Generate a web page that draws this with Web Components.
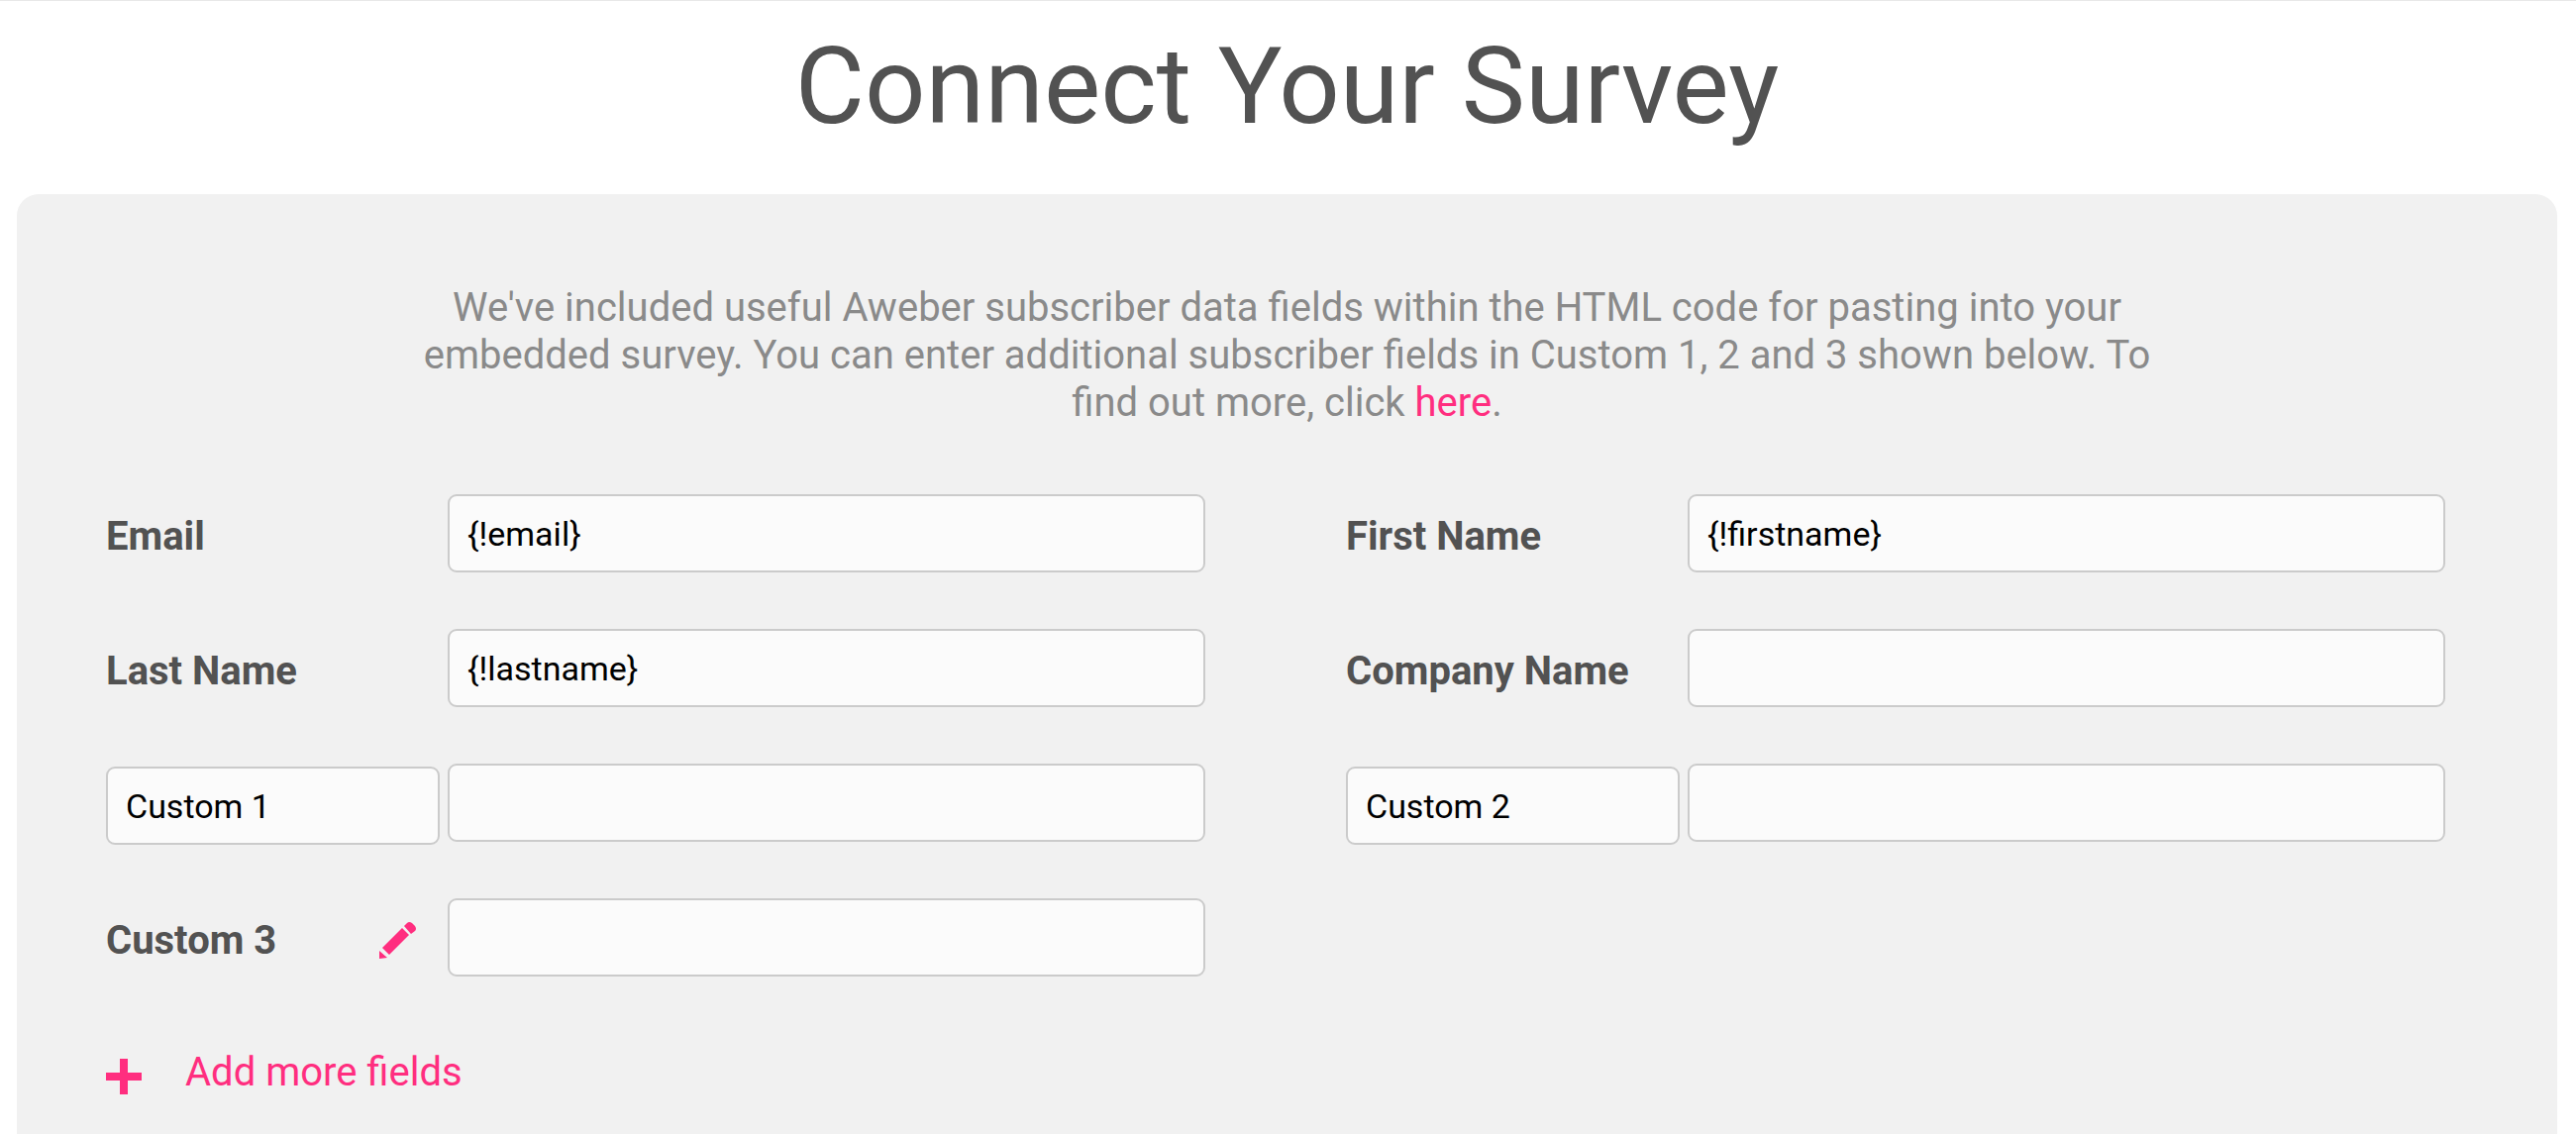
<!DOCTYPE html>
<html lang="en">
<head>
<meta charset="utf-8">
<title>Connect Your Survey</title>
<style>
  html {
    --text: #525252;
    --muted: #8a8a8a;
    --accent: #ff2e7f;
    --panel: #f1f1f1;
    --field: #fbfbfb;
    --line: #cbcbcb;
    --label-width: 337px;
  }
  body {
    margin: 0;
    font-family: Roboto, sans-serif;
    font-size: 40px;
    line-height: 48px;
    color: var(--text);
    background: #fff;
  }
  a {
    color: var(--accent);
    text-decoration: none;
  }
</style>
</head>
<body>

<survey-page>
  <span slot="title">Connect Your Survey</span>
  <survey-panel>
    <span slot="intro">We've included useful Aweber subscriber data fields within the HTML code for pasting into your embedded survey. You can enter additional subscriber fields in Custom 1, 2 and 3 shown below. To find out more, click <a href="#help">here</a>.</span>
    <survey-field label="Email" value="{!email}"></survey-field>
    <survey-field label="First Name" value="{!firstname}"></survey-field>
    <survey-field label="Last Name" value="{!lastname}"></survey-field>
    <survey-field label="Company Name"></survey-field>
    <survey-field label="Custom 1" editing></survey-field>
    <survey-field label="Custom 2" editing></survey-field>
    <survey-field label="Custom 3" custom></survey-field>
    <add-button slot="footer">Add more fields</add-button>
  </survey-panel>
</survey-page>

<script>
  function attach(el, html) {
    const template = document.createElement('template');
    template.innerHTML = html;
    el.attachShadow({mode: 'open'});
    el.shadowRoot.appendChild(template.content.cloneNode(true));
  }

  class SurveyPage extends HTMLElement {
    constructor() {
      super();
      attach(this, `
        <style>
          :host {
            display: flex;
            flex-direction: column;
            box-sizing: border-box;
            min-height: 100vh;
            border-top: 1px solid #e8e8e8;
          }
          h1 {
            margin: 0;
            padding: 22px 19px 45px 17px;
            font-size: 108px;
            line-height: 128px;
            font-weight: 400;
            text-align: center;
          }
          main {
            display: flex;
            flex: 1;
            padding: 0 19px 0 17px;
          }
        </style>
        <h1><slot name="title"></slot></h1>
        <main><slot></slot></main>
      `);
    }
  }

  class SurveyPanel extends HTMLElement {
    constructor() {
      super();
      attach(this, `
        <style>
          :host {
            display: block;
            flex: 1;
            padding-top: 91px;
            border-radius: 22px 22px 0 0;
            background: var(--panel);
          }
          p {
            width: 70%;
            margin: 0 auto 68px;
            color: var(--muted);
            text-align: center;
          }
          form {
            display: grid;
            grid-template-columns: 1fr 1fr;
            gap: 57px 142px;
            padding: 0 113px 0 90px;
          }
          .footer {
            grid-column: 1 / -1;
          }
        </style>
        <p><slot name="intro"></slot></p>
        <form>
          <slot></slot>
          <div class="footer"><slot name="footer"></slot></div>
        </form>
      `);
    }
  }

  class SurveyField extends HTMLElement {
    connectedCallback() {
      if (this.shadowRoot) return;
      attach(this, `
        <style>
          :host {
            display: grid;
            grid-template-columns: var(--label-width) 1fr;
            gap: 8px;
            height: 79px;
          }
          .name {
            display: flex;
            align-items: center;
            justify-content: space-between;
            height: 79px;
            padding-top: 3px;
          }
          label {
            font-weight: 700;
            white-space: nowrap;
          }
          input {
            box-sizing: border-box;
            width: 100%;
            height: 79px;
            margin: 0;
            padding: 0 18px;
            border: 2px solid var(--line);
            border-radius: 9px;
            background: var(--field);
            color: #000;
            font-family: inherit;
            font-size: 34px;
          }
          input:focus {
            outline: none;
            border-color: var(--accent);
          }
          button {
            display: flex;
            margin: 0 24px 0 0;
            padding: 0;
            border: 0;
            background: none;
            color: var(--accent);
            cursor: pointer;
          }
        </style>
        <div class="name"></div>
        <input id="value" type="text">
      `);
      this.value = this.shadowRoot.querySelector('#value');
      this.value.value = this.getAttribute('value') || '';
      this.render();
    }

    render() {
      const name = this.shadowRoot.querySelector('.name');
      const text = this.getAttribute('label');
      // custom fields swap their label for a text box while being renamed
      if (this.hasAttribute('editing')) {
        name.innerHTML = `<input id="name" type="text" aria-label="Field name">`;
        name.firstChild.value = text;
        this.value.setAttribute('aria-label', text);
        return;
      }
      name.innerHTML = `<label for="value">${text}</label>`;
      if (this.hasAttribute('custom')) {
        name.insertAdjacentHTML('beforeend', `
          <button type="button" aria-label="Edit field name">
            <svg width="38" height="38" viewBox="0 0 38 38" fill="currentColor">
              <path d="M1 29 L9 36 L1 37 Z"/>
              <path d="M4 26 L24 6 L31 13 L11 33 Z"/>
              <path d="M26 4 L29 1 Q31 -1 34 1 L37 4 Q39 7 37 9 L33 12 Z"/>
            </svg>
          </button>`);
        name.querySelector('button').addEventListener('click', () => {
          this.setAttribute('editing', '');
          this.render();
        });
      }
    }
  }

  class AddButton extends HTMLElement {
    constructor() {
      super();
      attach(this, `
        <style>
          :host {
            display: block;
          }
          button {
            display: flex;
            align-items: center;
            gap: 44px;
            height: 79px;
            padding: 0;
            border: 0;
            background: none;
            color: var(--accent);
            font: inherit;
            cursor: pointer;
          }
          svg {
            padding-top: 8px;
          }
        </style>
        <button type="button">
          <svg width="36" height="36" viewBox="0 0 36 36" fill="currentColor">
            <path d="M14 0h8v14h14v8H22v14h-8V22H0v-8h14z"/>
          </svg>
          <slot></slot>
        </button>
      `);
    }
  }

  window.customElements.define('survey-page', SurveyPage);
  window.customElements.define('survey-panel', SurveyPanel);
  window.customElements.define('survey-field', SurveyField);
  window.customElements.define('add-button', AddButton);
</script>
</body>
</html>
